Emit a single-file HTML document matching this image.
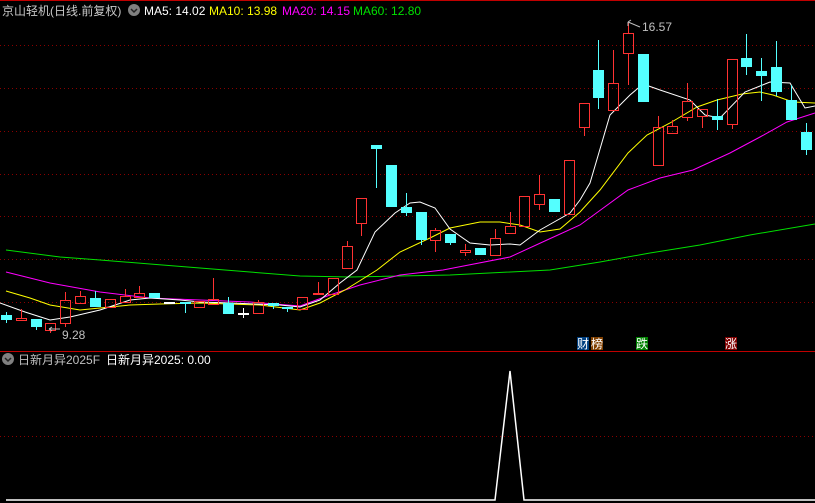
<!DOCTYPE html>
<html><head><meta charset="utf-8"><style>
html,body{margin:0;padding:0;background:#000;width:815px;height:503px;overflow:hidden}
svg{display:block}
text{font-family:"Liberation Sans","Noto Sans CJK SC",sans-serif;font-size:12px}
</style></head><body>
<svg id="s" width="815" height="503" xmlns="http://www.w3.org/2000/svg">
<rect width="815" height="503" fill="#000"/>
<line x1="0" y1="0.5" x2="815" y2="0.5" stroke="#c00000"/>
<g stroke="#8a0000" stroke-dasharray="1,3">
<line x1="0" y1="45.5" x2="815" y2="45.5"/>
<line x1="0" y1="88.5" x2="815" y2="88.5"/>
<line x1="0" y1="131.5" x2="815" y2="131.5"/>
<line x1="0" y1="174.5" x2="815" y2="174.5"/>
<line x1="0" y1="216.5" x2="815" y2="216.5"/>
<line x1="0" y1="259.5" x2="815" y2="259.5"/>
<line x1="0" y1="302.5" x2="815" y2="302.5"/>
<line x1="0" y1="436.5" x2="815" y2="436.5"/>
</g>
<line x1="0" y1="351.5" x2="815" y2="351.5" stroke="#c00000"/>
<polyline fill="none" stroke="#00e000" points="6,250 60,257 100,260 150,264 200,268 250,272 300,276 350,277 450,275 550,270 600,262 650,253 700,245 750,235 815,224"/>
<polyline fill="none" stroke="#ff00ff" points="6,272 50,283 100,292 150,298 200,300 250,302 300,306 330,295 360,285 400,275 443,270 510,257 547,240 580,225 628,190 660,178 693,170 730,153 760,137 787,122 815,113"/>
<polyline fill="none" stroke="#ffff00" points="6,291 30,298 50,305 80,310 100,308 130,305 160,304 200,303 260,305 300,310 320,303 345,290 377,270 400,252 430,238 450,228 480,222 500,222 520,225 540,232 560,229 580,212 600,190 628,153 647,135 670,123 697,107 717,100 742,94 760,92 773,95 793,102 815,103"/>
<polyline fill="none" stroke="#ffffff" points="0,303 25,312 50,320 70,317 100,310 130,300 150,298 180,300 200,302 230,303 280,305 300,307 320,300 340,283 357,270 375,232 395,213 410,203 420,202 435,208 450,229 470,243 490,245 510,244 520,245 540,230 570,213 580,200 590,183 610,115 630,95 643,84 660,90 690,100 705,115 720,118 745,92 770,82 790,83 805,108 815,106"/>
<g id="c" shape-rendering="crispEdges"></g>
<text x="62" y="339" fill="#c0c0c0">9.28</text>
<path d="M49,329 L52,327 M49,329 L52,331 M49,329 L60,329" stroke="#c0c0c0" fill="none"/>
<text x="642" y="31" fill="#c0c0c0">16.57</text>
<path d="M628,22 L631,20 M628,22 L628,26 M628,22 L640,27" stroke="#c0c0c0" fill="none"/>
<text x="2" y="15" fill="#c8c8c8">京山轻机(日线.前复权)</text>
<circle cx="134" cy="10" r="6" fill="#808080"/>
<path d="M131,9 L134,12 L137,9" stroke="#222" stroke-width="1.5" fill="none"/>
<text x="144" y="15" fill="#ffffff">MA5: 14.02</text>
<text x="209" y="15" fill="#ffff00">MA10: 13.98</text>
<text x="282" y="15" fill="#ff00ff">MA20: 14.15</text>
<text x="353" y="15" fill="#00e000">MA60: 12.80</text>
<rect x="577" y="337" width="12" height="13" fill="#003f7f"/><text x="577" y="348" fill="#fff">财</text>
<rect x="591" y="337" width="12" height="13" fill="#7f3f00"/><text x="591" y="348" fill="#fff">榜</text>
<rect x="636" y="337" width="12" height="13" fill="#008000"/><text x="636" y="348" fill="#fff">跌</text>
<rect x="725" y="337" width="12" height="13" fill="#800000"/><text x="725" y="348" fill="#fff">涨</text>
<circle cx="8" cy="359" r="6" fill="#808080"/>
<path d="M5,358 L8,361 L11,358" stroke="#222" stroke-width="1.5" fill="none"/>
<text x="18" y="364" fill="#c0c0c0">日新月异2025F</text>
<text x="106" y="364" fill="#ffffff">日新月异2025: 0.00</text>
<polyline fill="none" stroke="#ffffff" stroke-width="1.5" points="6,500 495,500 510,371 524,500 815,500"/>
</svg>
<script>
var R="#ff3232",C="#54ffff",W="#ffffff";
var d=[
[1,315,320,312,323,C],[16,318,320,309,320,R],[31,319,327,319,330,C],[45,323,330,323,333,R],
[60,300,323,292,327,R],[75,296,303,291,303,R],[90,298,307,291,307,C],[105,299,307,299,307,R],
[120,296,302,289,302,R],[134,293,297,286,297,R],[149,293,298,293,298,C],[164,302,304,302,304,W],
[180,302,304,302,313,C],[194,301,307,301,307,R],[208,299,304,278,304,R],[223,303,314,297,314,C],
[238,313,314,308,318,W],[253,302,313,300,313,R],[268,303,306,303,309,C],[282,307,309,307,312,C],
[297,297,309,297,309,R],[313,293,294,282,294,R],[328,278,294,278,294,R],
[342,246,268,241,268,R],[356,198,223,198,236,R],[371,145,149,145,188,C],[386,165,207,165,207,C],
[401,207,213,193,216,C],[416,212,240,212,245,C],[430,230,240,228,252,R],[445,234,243,234,245,C],
[460,250,252,244,256,R],[475,248,255,248,255,C],[490,238,255,229,255,R],[505,226,233,212,233,R],
[519,196,226,196,226,R],[534,194,204,175,210,R],[549,199,212,199,212,C],[564,160,214,160,214,R],
[579,103,127,103,136,R],[593,70,98,40,109,C],[608,83,110,50,110,R],[623,33,53,23,85,R],
[638,54,102,54,102,C],[653,127,165,116,165,R],[667,126,133,120,133,R],[682,101,117,83,121,R],
[697,109,116,109,128,R],[712,116,120,99,130,C],[727,59,124,59,129,R],[741,58,67,34,75,C],
[756,71,76,58,101,C],[771,67,92,41,96,C],[786,100,120,85,120,C],[801,132,150,123,155,C]];
var g=document.getElementById("c"),h="";
d.forEach(function(a){var x=a[0],cx=x+5,col=a[5];
if(col==R){
h+='<rect x="'+cx+'" y="'+a[3]+'" width="1" height="'+(a[1]-a[3])+'" fill="'+R+'"/>';
h+='<rect x="'+cx+'" y="'+a[2]+'" width="1" height="'+(a[4]-a[2])+'" fill="'+R+'"/>';
var hh=Math.max(a[2]-a[1],1);
h+='<rect x="'+x+'" y="'+a[1]+'" width="11" height="1" fill="'+R+'"/>';
h+='<rect x="'+x+'" y="'+(a[1]+hh)+'" width="11" height="1" fill="'+R+'"/>';
h+='<rect x="'+x+'" y="'+a[1]+'" width="1" height="'+(hh+1)+'" fill="'+R+'"/>';
h+='<rect x="'+(x+10)+'" y="'+a[1]+'" width="1" height="'+(hh+1)+'" fill="'+R+'"/>';
}else{
h+='<rect x="'+cx+'" y="'+a[3]+'" width="1" height="'+(a[4]-a[3])+'" fill="'+col+'"/>';
var hh=Math.max(a[2]-a[1],2);h+='<rect x="'+x+'" y="'+a[1]+'" width="11" height="'+hh+'" fill="'+col+'"/>';}
});
g.innerHTML=h;
</script>
</body></html>
